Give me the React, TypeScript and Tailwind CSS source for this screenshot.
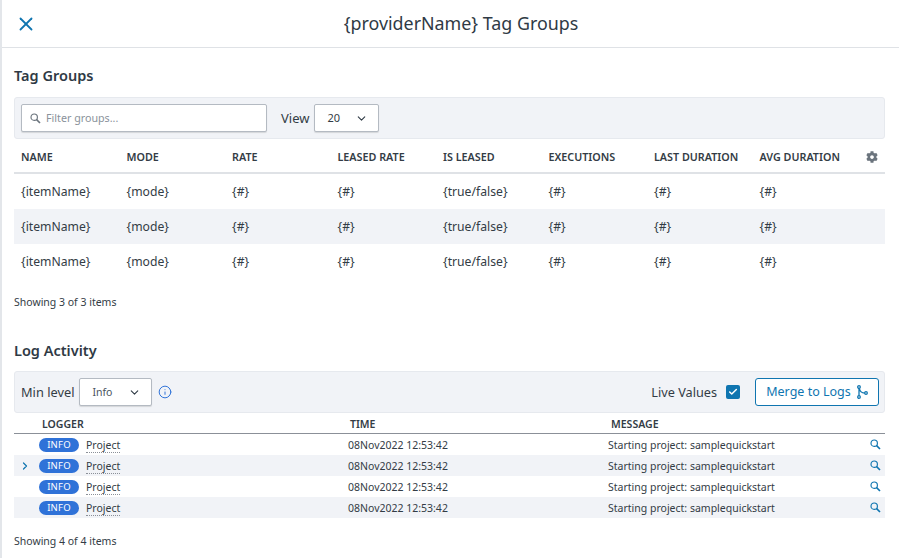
import React from 'react';
import { ChevronDown, ChevronRight, Info, X, Check } from 'lucide-react';
import { FaCog } from 'react-icons/fa';

const font = "font-['Noto_Sans',sans-serif]";

const columns = ['NAME', 'MODE', 'RATE', 'LEASED RATE', 'IS LEASED', 'EXECUTIONS', 'LAST DURATION', 'AVG DURATION'];
const row = ['{itemName}', '{mode}', '{#}', '{#}', '{true/false}', '{#}', '{#}', '{#}'];

function MergeIcon() {
  return (
    <svg width="11" height="14" viewBox="0 0 11 14" fill="none" stroke="currentColor" strokeWidth="1.3">
      <circle cx="2" cy="2" r="1.3" />
      <circle cx="2" cy="12" r="1.3" />
      <circle cx="9" cy="8" r="1.3" />
      <path d="M2 3.3v7.4M2.4 3.5C3 6.8 5 8 7.7 8" />
    </svg>
  );
}

function SearchIcon({ className }: { className: string }) {
  return (
    <svg width="11" height="11" viewBox="0 0 11 11" fill="none" stroke="currentColor" className={className}>
      <circle cx="4.2" cy="4.2" r="3.2" strokeWidth="1.15" />
      <path d="M6.6 6.6L10 10" strokeWidth="1.6" />
    </svg>
  );
}

function TagGroups() {
  return (
    <section className="px-3.5">
      <h2 className="h-[20px] mt-[17px] text-[14.5px] leading-[20px] font-semibold text-[#2f3a45]">Tag Groups</h2>
      <div className="mt-[12px] h-[42px] flex items-center pl-[6px] bg-[#f1f3f7] border border-[#e6e9ee] rounded-[3px]">
        <div className="w-[246px] h-[28px] flex items-center gap-[5px] pl-[8px] bg-white border border-[#b4bac2] rounded-[2px] shadow-[0_1px_1px_rgba(0,0,0,0.12)]">
          <SearchIcon className="text-[#6b747d]" />
          <span className="pt-[1px] text-[10.7px] text-[#8a929b]">Filter groups...</span>
        </div>
        <span className="ml-3.5 pt-[1px] text-[13px] text-[#333c45]">View</span>
        <div className="ml-[5px] w-[65px] h-[28px] flex items-center justify-between pl-3 pr-2 bg-white border border-[#b4bac2] rounded-[2px] shadow-[0_1px_1px_rgba(0,0,0,0.12)]">
          <span className="pt-[1px] text-[11px] text-[#333c45]">20</span>
          <ChevronDown size={13} strokeWidth={2} className="mr-[2px] text-[#2f3a45]" />
        </div>
      </div>
      <div className="h-[35px] flex items-center pt-[3px] pl-[7px] border-b-2 border-[#dfe2e6] relative">
        {columns.map((c) => (
          <span key={c} className="w-[105.5px] shrink-0 text-[10.75px] font-semibold text-[#333c45]">{c}</span>
        ))}
        <FaCog size={12} className="absolute right-[7px] top-[12px] text-[#6b747d]" />
      </div>
      {[0, 1, 2].map((r) => (
        <div key={r} className={`h-[35px] flex items-center pt-[2px] pl-[7px] ${r === 1 ? 'bg-[#f1f3f7]' : ''}`}>
          {row.map((v, i) => (
            <span key={i} className="w-[105.5px] shrink-0 text-[12.2px] text-[#333c45]">{v}</span>
          ))}
        </div>
      ))}
      <p className="mt-[15px] h-[16px] text-[10.5px] leading-[16px] text-[#333c45]">Showing 3 of 3 items</p>
    </section>
  );
}

function LogActivity() {
  return (
    <section className="px-3.5">
      <h2 className="mt-[30px] h-[20px] text-[14.5px] leading-[20px] font-semibold text-[#2f3a45]">Log Activity</h2>
      <div className="mt-[11px] h-[42px] flex items-center pl-[6px] pr-[5px] bg-[#f1f3f7] border border-[#e6e9ee] rounded-[3px]">
        <span className="pt-[1px] text-[12.8px] text-[#333c45]">Min level</span>
        <div className="ml-[5px] w-[73px] h-[28px] flex items-center justify-between pl-3 pr-2 bg-white border border-[#b4bac2] rounded-[2px] shadow-[0_1px_1px_rgba(0,0,0,0.12)]">
          <span className="pt-[1px] text-[10.5px] text-[#4a545e]">Info</span>
          <ChevronDown size={13} strokeWidth={2} className="mr-[2px] text-[#2f3a45]" />
        </div>
        <Info size={14} strokeWidth={1.7} className="ml-1.5 text-[#2f72d8]" />
        <span className="ml-auto pt-[1px] text-[12.7px] text-[#333c45]">Live Values</span>
        <span className="ml-[9px] w-[14px] h-[14px] flex items-center justify-center bg-[#0f75b0] rounded-[2px]">
          <Check size={10} strokeWidth={3.5} className="text-white" />
        </span>
        <button className="ml-[15px] w-[124px] h-[28px] flex items-center justify-center gap-[6px] bg-white border border-[#0f75b0] rounded-[3px] text-[12.5px] text-[#0f75b0]">
          <span className="pt-[1px]">Merge to Logs</span>
          <MergeIcon />
        </button>
      </div>
      <div className="h-[21px] flex items-center pt-[3px] border-b border-[#8b9098] text-[10.5px] font-semibold text-[#333c45]">
        <span className="ml-[28px] w-[308px]">LOGGER</span>
        <span className="w-[261px]">TIME</span>
        <span>MESSAGE</span>
      </div>
      {[0, 1, 2, 3].map((r) => (
        <div key={r} className={`h-[21px] flex items-center text-[10.5px] text-[#333c45] ${r % 2 === 1 ? 'bg-[#f1f3f7]' : ''}`}>
          <span className="w-[25px] shrink-0 pl-[5px]">
            {r === 1 && <ChevronRight size={12} strokeWidth={2.4} className="text-[#0f75b0]" />}
          </span>
          <span className="mt-[1px] w-[40px] h-[14px] flex items-center justify-center rounded-full bg-[#2f72d8] text-[9.5px] tracking-[0.2px] text-white">INFO</span>
          <span className="ml-[7px] w-[262px] shrink-0 pt-[3px]">
            <span className="border-b border-dotted border-[#8b9098] leading-[13px] inline-block">Project</span>
          </span>
          <span className="w-[260px] shrink-0 pt-[2px]">08Nov2022 12:53:42</span>
          <span className="pt-[2px]">Starting project: samplequickstart</span>
          <SearchIcon className="ml-auto mr-[4px] text-[#0f75b0]" />
        </div>
      ))}
      <p className="mt-[15px] text-[10.5px] leading-[16px] text-[#333c45]">Showing 4 of 4 items</p>
    </section>
  );
}

export default function App() {
  return (
    <div className={`${font} w-[899px] h-[558px] overflow-hidden bg-white border-l-2 border-[#e3e6ea]`}>
      <header className="h-[48px] flex items-center relative border-b border-[#dfe2e6]">
        <X size={22} strokeWidth={2} className="absolute left-[13px] top-[13px] text-[#0f75b0]" />
        <h1 className="w-full pl-[21px] text-center text-[17.85px] text-[#2f3a45]">{'{providerName} Tag Groups'}</h1>
      </header>
      <div className="-ml-0.5">
        <TagGroups />
        <LogActivity />
      </div>
    </div>
  );
}
